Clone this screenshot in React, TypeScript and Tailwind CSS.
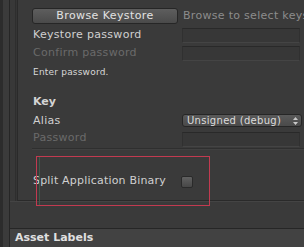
import React from "react";

const font = "font-['DejaVu_Sans',sans-serif]";

function Field({ top = 1 }: { top?: number }) {
  return (
    <div
      className="h-[15px] w-[118px] bg-[#373737] border-t border-[#292929] border-b border-b-[#444444] border-x border-x-[#303030]"
      style={{ marginTop: top }}
    />
  );
}

function Row({ h = 18, label, dim, children }: { h?: number; label: string; dim?: boolean; children?: React.ReactNode }) {
  return (
    <div className="flex items-start" style={{ height: h }}>
      <div className={`w-[164px] pl-[15px] leading-[18px] text-[11px] tracking-[0.3px] ${dim ? "text-[#6a6a6a]" : "text-[#d0d0d0]"}`}>
        {label}
      </div>
      {children}
    </div>
  );
}

export default function App() {
  return (
    <div className={`relative w-[304px] h-[247px] bg-[#3a3a3a] flex overflow-hidden ${font}`}>
      {/* outer left strip */}
      <div className="flex h-full">
        <div className="w-[3px] bg-[#2c2c2c]" />
        <div className="w-[6px] bg-[#3b3b3b]" />
        <div className="w-[1px] bg-[#262626]" />
      </div>

      <div className="flex-1 flex flex-col">
        <div className="flex h-[201px]">
          <div className="flex">
            <div className="w-[5px] bg-[#383838]" />
            <div className="w-[1px] bg-[#2e2e2e]" />
            <div className="w-[1px] bg-[#353535]" />
          </div>
          {/* inspector box */}
          <div className="flex-1 flex flex-col border-l border-b border-[#2a2a2a] pt-[8px] min-w-0">
            <div className="flex items-start h-[18px]">
              <div className="shrink-0 ml-[14px] w-[146px] h-[16px] rounded-[3px] border border-[#262626] bg-gradient-to-b from-[#5e5e5e] to-[#4a4a4a] text-[#e2e2e2] text-[11px] leading-[14px] text-center tracking-[0.4px]">
                Browse Keystore
              </div>
              <div className="ml-[5px] text-[11px] leading-[16px] text-[#8c8c8c] tracking-[0.3px] whitespace-nowrap overflow-hidden">
                Browse to select keystore
              </div>
            </div>
            <Row label="Keystore password">
              <Field top={2} />
            </Row>
            <Row label="Confirm password" dim>
              <Field top={2} />
            </Row>
            <div className="mt-[3px] pl-[15px] h-[14px] text-[9px] leading-[14px] tracking-[0.2px] text-[#d8d8d8]">Enter password.</div>
            <div className="mt-[14px] h-[19px] pl-[15px] text-[11px] leading-[18px] font-bold text-[#d4d4d4]">Key</div>
            <Row h={17} label="Alias">
              <div className="mt-[2px] w-[120px] h-[13px] rounded-[3px] border border-[#262626] bg-gradient-to-b from-[#5a5a5a] to-[#4a4a4a] flex items-center justify-between pl-[4px] pr-[3px]">
                <span className="text-[10px] leading-[11px] text-[#dcdcdc] tracking-[0.3px]">Unsigned (debug)</span>
                <svg width="5" height="8" viewBox="0 0 5 8">
                  <path d="M2.5 0 L5 3 L0 3 Z M2.5 8 L5 5 L0 5 Z" fill="#c8c8c8" />
                </svg>
              </div>
            </Row>
            <Row h={19} label="Password" dim>
              <Field top={3} />
            </Row>
            <div className="h-[1px] bg-[#2f2f2f] ml-[14px] mr-[3px]" />
            <div className="h-[1px] bg-[#404040] ml-[14px] mr-[3px]" />
            <div className="mt-[22px] flex items-start h-[18px]">
              <div className="w-[163px] pl-[15px] text-[11px] leading-[18px] tracking-[0.2px] text-[#d0d0d0] whitespace-nowrap">
                Split Application Binary
              </div>
              <div className="mt-[4px] w-[12px] h-[12px] rounded-[2px] border border-[#2a2a2a] bg-gradient-to-b from-[#616161] to-[#474747]" />
            </div>
          </div>
        </div>
        <div className="h-[1px] bg-[#444444]" />
        <div className="flex-1" />
        <div className="h-[19px] border-t border-[#262626] bg-[#424242] pl-[5px] text-[11px] leading-[18px] font-bold text-[#e0e0e0]">
          Asset Labels
        </div>
      </div>

      {/* annotation overlay */}
      <div className="absolute left-[36px] top-[156px] w-[174px] h-[50px] border border-[#c23a50]" />
      <div className="absolute left-[39px] top-[157px] w-[1px] h-[48px] bg-[#3f5a4a]" />
    </div>
  );
}
